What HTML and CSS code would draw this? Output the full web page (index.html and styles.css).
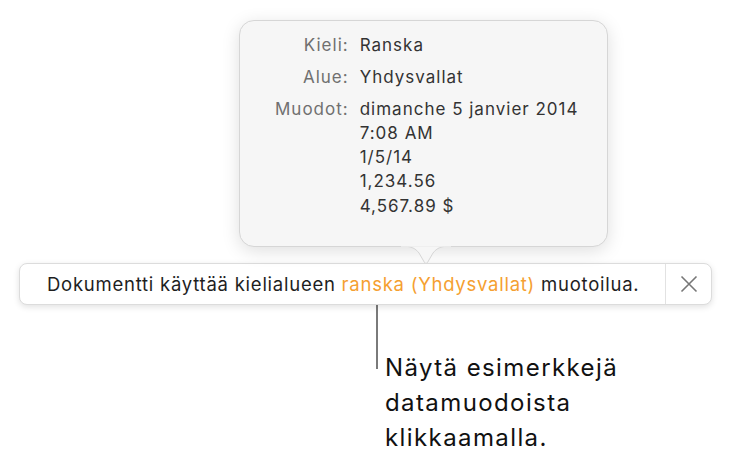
FILE: index.html
```html
<!DOCTYPE html>
<html lang="fi">
<head>
<meta charset="utf-8">
<link rel="stylesheet" href="styles.css">
</head>
<body>
<div class="page">
  <div class="popover">
    <div class="grid">
      <div class="label">Kieli:</div>
      <div class="value">Ranska</div>
      <div class="label">Alue:</div>
      <div class="value">Yhdysvallat</div>
      <div class="label">Muodot:</div>
      <div class="value">dimanche 5 janvier 2014<br>7:08 AM<br>1/5/14<br>1,234.56<br>4,567.89 $</div>
    </div>
    <svg class="arrow" width="50" height="20" viewBox="0 0 50 20">
      <path d="M0 0 C10 0 14 2 18 7 L23.5 16.5 Q25 18.5 26.5 16.5 L32 7 C36 2 40 0 50 0 Z" fill="#f6f6f6" stroke="#d6d6d6" stroke-width="1"/>
      <rect x="0" y="-2" width="50" height="2.6" fill="#f6f6f6"/>
    </svg>
  </div>
  <div class="bar">
    <div class="message">Dokumentti käyttää kielialueen <span class="accent">ranska (Yhdysvallat)</span> muotoilua.</div>
    <div class="close">
      <svg width="18" height="18" viewBox="0 0 18 18"><path d="M1.5 1.5 L16.5 16.5 M16.5 1.5 L1.5 16.5" stroke="#777" stroke-width="1.6" fill="none"/></svg>
    </div>
  </div>
  <div class="callout">
    <div class="line"></div>
    <div class="note">Näytä esimerkkejä<br>datamuodoista<br>klikkaamalla.</div>
  </div>
</div>
</body>
</html>
```
FILE: styles.css
```css
html, body {
  margin: 0;
  padding: 0;
  background: #ffffff;
}
.page {
  width: 732px;
  height: 465px;
  font-family: Inter, Roboto, sans-serif;
  display: flex;
  flex-direction: column;
  position: relative;
}
.popover {
  position: relative;
  margin: 20px 0 0 239px;
  width: 369px;
  height: 227px;
  box-sizing: border-box;
  background: #f6f6f6;
  border: 1px solid #d6d6d6;
  border-radius: 15px;
  box-shadow: 0 4px 18px rgba(0,0,0,0.13);
  padding: 12px 0 0 35px;
  z-index: 2;
}
.grid {
  display: grid;
  grid-template-columns: auto auto;
  justify-content: start;
  column-gap: 11px;
  row-gap: 7.5px;
  font-size: 17px;
  letter-spacing: 1px;
  line-height: 24.3px;
}
.label {
  text-align: right;
  color: #707070;
}
.value {
  color: #333333;
}
.arrow {
  position: absolute;
  left: 161px;
  top: 225px;
  overflow: visible;
}
.bar {
  margin: 16px 0 0 19px;
  width: 693px;
  height: 42px;
  box-sizing: border-box;
  border: 1px solid #dcdcdc;
  border-radius: 8px;
  background: #ffffff;
  box-shadow: 0 2px 6px rgba(0,0,0,0.12);
  display: flex;
  align-items: center;
  z-index: 1;
}
.message {
  flex: 1;
  padding-left: 27px;
  font-size: 18.5px;
  letter-spacing: 0.75px;
  color: #1e1e1e;
}
.accent {
  color: #f5a031;
}
.close {
  width: 45px;
  height: 100%;
  border-left: 1px solid #e2e2e2;
  display: flex;
  align-items: center;
  justify-content: center;
}
.close svg {
  display: block;
}
.callout {
  display: flex;
  margin-left: 376px;
}
.line {
  width: 2px;
  height: 64px;
  background: #7a7a7a;
}
.note {
  margin: 45px 0 0 7px;
  font-size: 24px;
  letter-spacing: 1.4px;
  line-height: 35px;
  color: #111111;
}
```
